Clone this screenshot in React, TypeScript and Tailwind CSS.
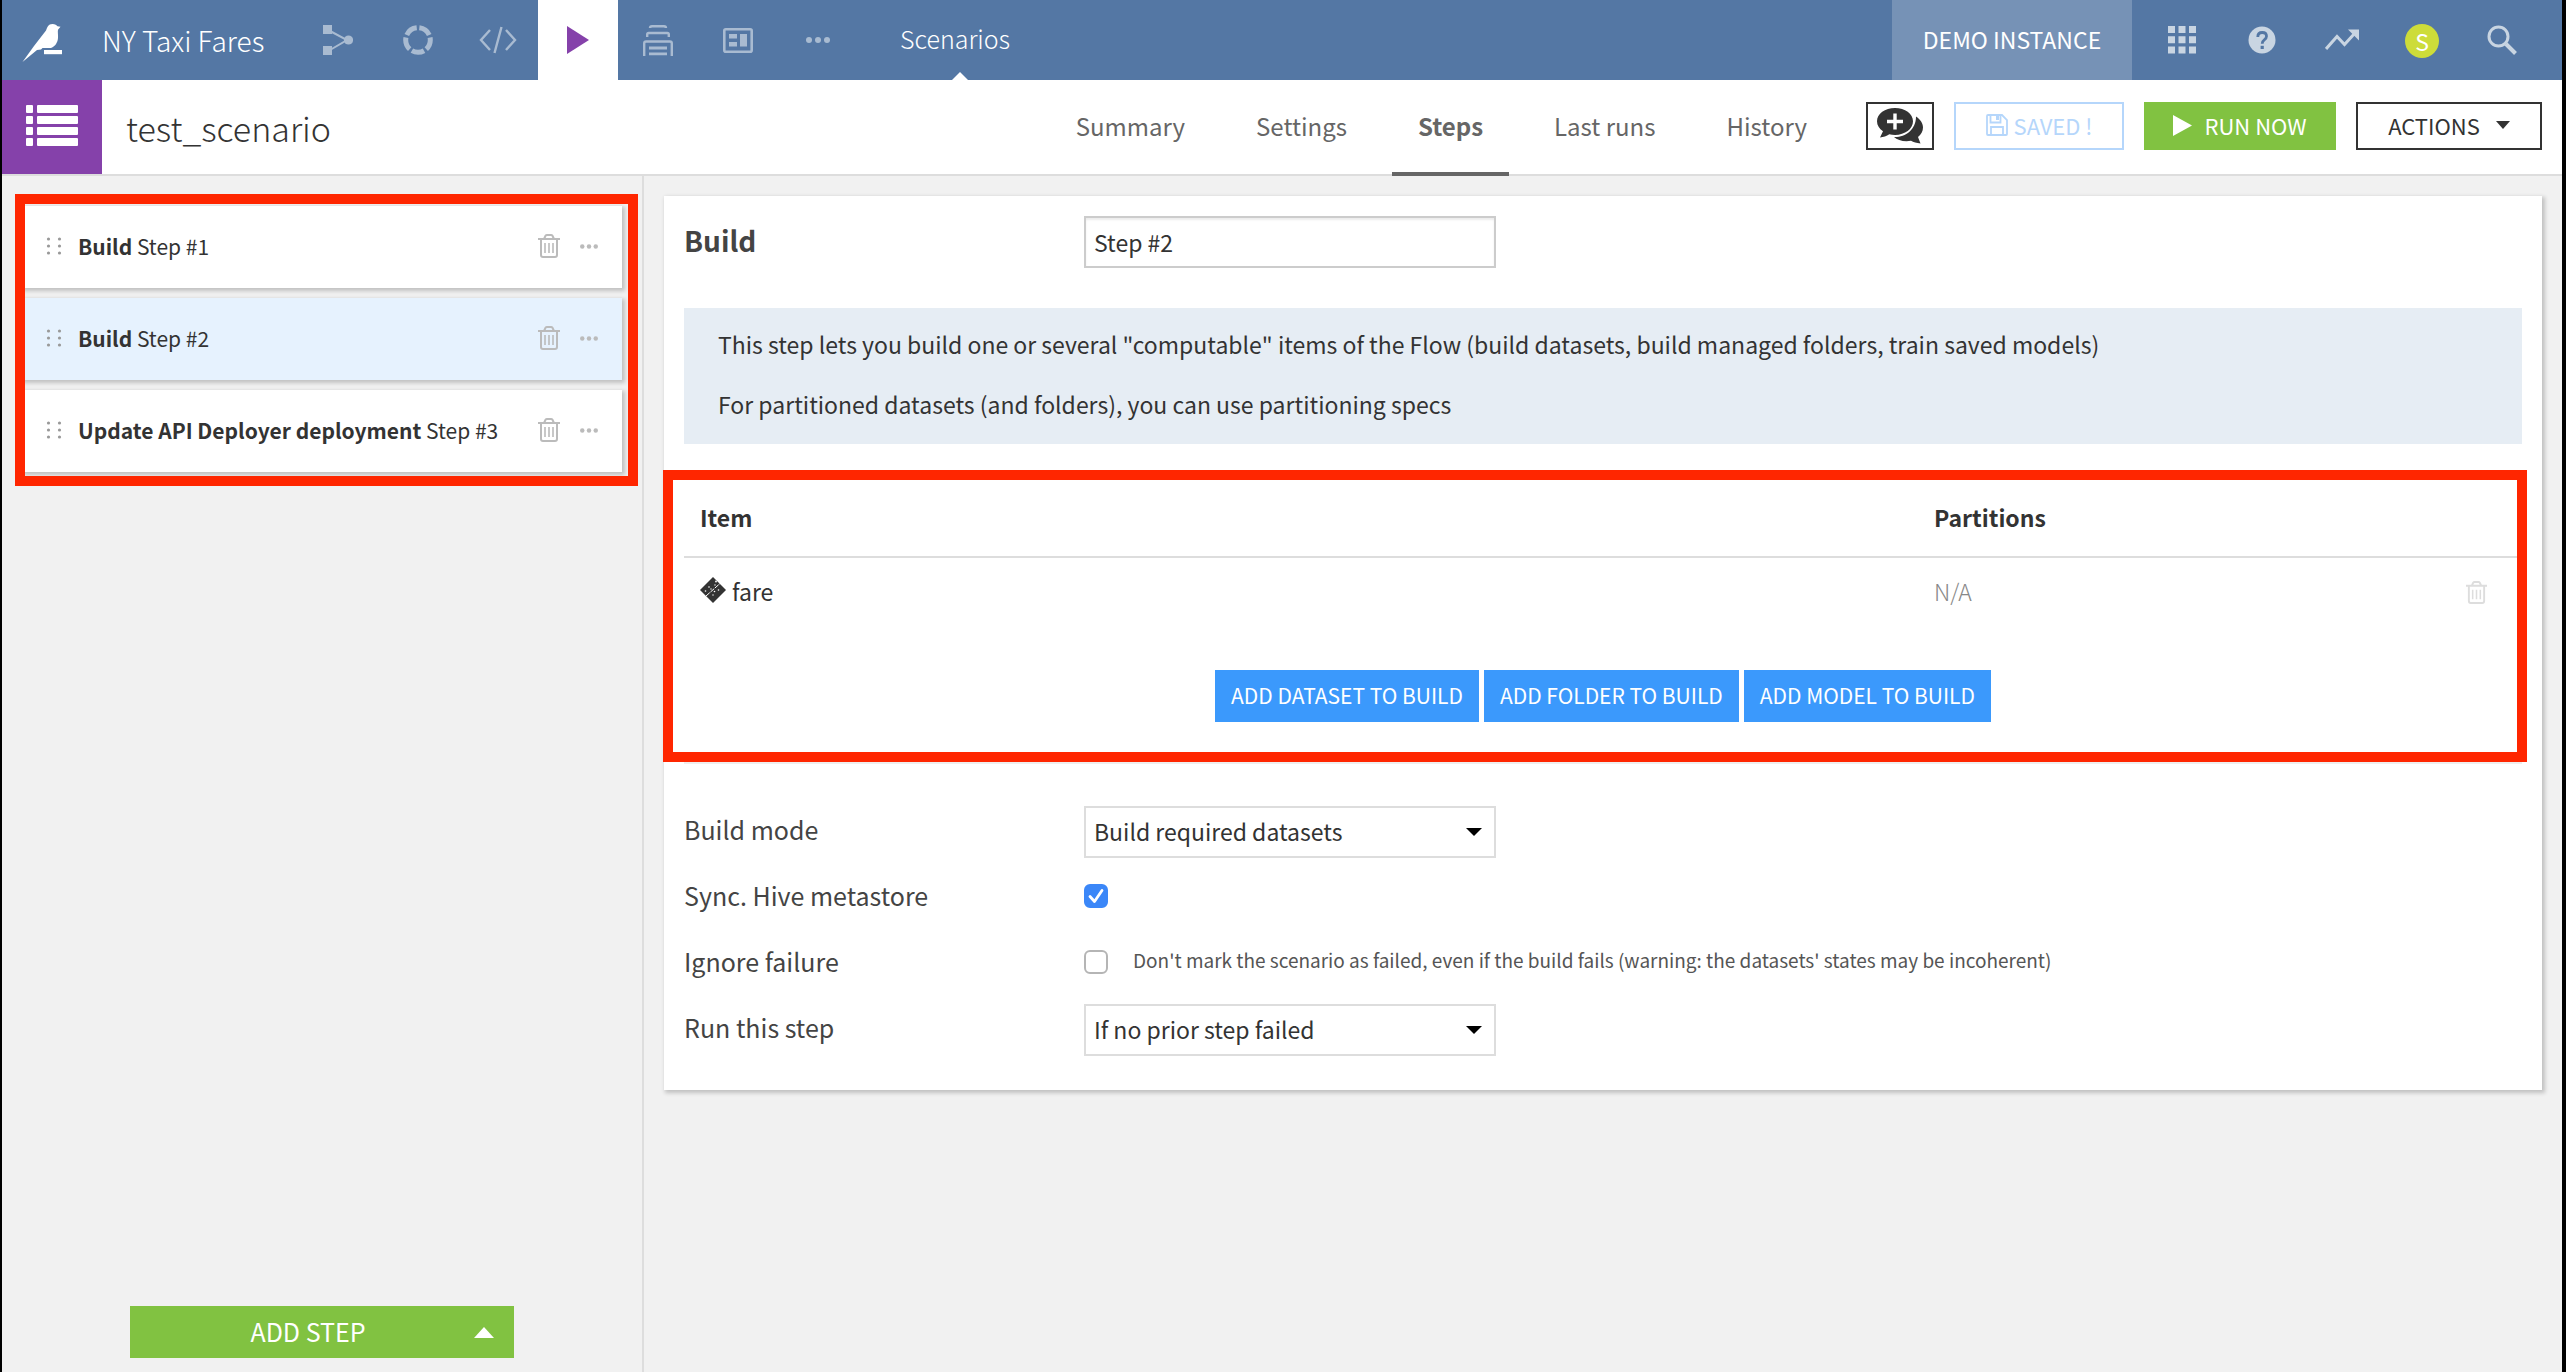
import React from 'react';

interface Step {
  type: string;
  name: string;
  selected?: boolean;
}

const steps: Step[] = [
  { type: 'Build', name: 'Step #1' },
  { type: 'Build', name: 'Step #2', selected: true },
  { type: 'Update API Deployer deployment', name: 'Step #3' },
];

const tabs = ['Summary', 'Settings', 'Steps', 'Last runs', 'History'];

const TrashIcon: React.FC<{ className?: string }> = ({ className }) => (
  <svg className={className} viewBox="0 0 22 24" fill="none" stroke="currentColor" strokeWidth={2}>
    <path d="M0 5h22M6 5l1.500-3.200Q8 1 9 1h4q1 0 1.500.800L16 5M3 5v16q0 2 2 2h12q2 0 2-2V5" />
    <path d="M7 9v10M11 9v10M15 9v10" strokeWidth={1.6} />
  </svg>
);

const DotsIcon: React.FC<{ className?: string }> = ({ className }) => (
  <svg className={className} viewBox="0 0 24 6" fill="currentColor">
    <circle cx="3" cy="3" r="3" />
    <circle cx="12" cy="3" r="3" />
    <circle cx="21" cy="3" r="3" />
  </svg>
);

const DragHandle = () => (
  <svg className="w-4 h-5 text-[#999]" viewBox="0 0 16 20" fill="currentColor">
    {[2, 9, 16].map((y) => (
      <g key={y}>
        <circle cx="2.500" cy={y} r="1.600" />
        <circle cx="13.500" cy={y} r="1.600" />
      </g>
    ))}
  </svg>
);

const BirdLogo = () => (
  <svg className="w-10 h-[38px]" viewBox="0 0 40 38" fill="white">
    <path d="M30.500 0c2.500 0 4.300 1 5 2.300L38.500 2.700l-2.500 3c-.500 2 .300 5 0 8.300-.400 4.500-2.500 8-7 10h-8.500l-1.500 1.500-4 .500L.500 38 12 22 24 6.500C25.500 3 26 0 30.500 0z" />
    <path d="M22 26h18v4.200H22z" />
  </svg>
);

const FlowIcon = () => (
  <svg className="w-[30px] h-[30px]" viewBox="0 0 30 30" fill="currentColor">
    <path d="M0 0h9v9H0zM0 21h9v9H0z" />
    <path d="M7 6l17 9L7 25" fill="none" stroke="currentColor" strokeWidth={2} />
    <circle cx="25.500" cy="15" r="4.600" />
  </svg>
);

const LabIcon = () => (
  <svg className="w-[30px] h-[30px]" viewBox="0 0 30 30" fill="none" stroke="currentColor" strokeWidth={5}>
    <circle cx="15" cy="15" r="12.300" pathLength={100} strokeDasharray="16.500 3.500" strokeDashoffset={-16.800} />
  </svg>
);

const CodeIcon = () => (
  <svg className="w-[38px] h-7" viewBox="0 0 38 28" fill="none" stroke="currentColor" strokeWidth={2.400}>
    <path d="M11 4L2 14l9 10M27 4l9 10-9 10M22.500 1L15.500 27" />
  </svg>
);

const PlayIcon: React.FC<{ className?: string }> = ({ className }) => (
  <svg className={className} viewBox="0 0 22 28" fill="currentColor" preserveAspectRatio="none">
    <path d="M0 0l22 14L0 28z" />
  </svg>
);

const JobsIcon = () => (
  <svg className="w-[30px] h-[31px]" viewBox="0 0 30 31" fill="none" stroke="currentColor" strokeWidth={2.400}>
    <path d="M7 3q0-1.700 2-1.700h12q2 0 2 1.700M4.200 12V9.500q0-1.500 1.500-1.500h18.600q1.500 0 1.500 1.500V12M1.200 31V18.500Q1.200 16.500 3 16.500h24q1.800 0 1.800 2V31" />
    <path d="M6 23h18M6 28.800h18" strokeWidth={2.800} />
  </svg>
);

const DashboardIcon = () => (
  <svg className="w-[30px] h-[25px]" viewBox="0 0 30 25" fill="currentColor">
    <rect x="1.300" y="1.300" width="27.400" height="22.400" rx="1.500" fill="none" stroke="currentColor" strokeWidth={2.600} />
    <path d="M6 6h8v4.500H6zM6 14h8v4.500H6zM17 6h7v12.500h-7z" />
  </svg>
);

const GridIcon = () => (
  <svg className="w-7 h-7" viewBox="0 0 28 28" fill="currentColor">
    {[0, 10.300, 20.600].map((y) => (
      <path key={y} d={`M0 ${y}h7v7H0zM10.500 ${y}h7v7h-7zM21 ${y}h7v7h-7z`} />
    ))}
  </svg>
);

const HelpIcon = () => (
  <svg className="w-7 h-7" viewBox="0 0 28 28">
    <circle cx="14" cy="14" r="13.500" fill="currentColor" />
    <path d="M9.800 11q0-4.500 4.400-4.500 4.300 0 4.300 3.800 0 2-2.200 3.500-2.100 1.500-2.100 4" fill="none" stroke="#5477a4" strokeWidth={2.800} />
    <path d="M12.600 19.800h3.200V23h-3.200z" fill="#5477a4" />
  </svg>
);

const TrendIcon = () => (
  <svg className="w-[34px] h-[22px]" viewBox="0 0 34 22" fill="none" stroke="currentColor" strokeWidth={3}>
    <path d="M1 20L12 7.500l7.500 8L30 4" />
    <path d="M23 .500h11v11z" fill="currentColor" stroke="none" />
  </svg>
);

const SearchIcon = () => (
  <svg className="w-[30px] h-[30px]" viewBox="0 0 30 30" fill="none" stroke="currentColor">
    <circle cx="11.500" cy="11.500" r="9.500" strokeWidth={3} />
    <path d="M19 19l9.500 9.500" strokeWidth={4} />
  </svg>
);

const ScenarioIcon = () => (
  <svg className="w-[52px] h-[41px]" viewBox="0 0 52 41" fill="white">
    {[0, 11, 22, 33].map((y) => (
      <g key={y}>
        <rect y={y} width="7" height="8" rx="1" />
        <rect x="11" y={y} width="41" height="8" rx="1" />
      </g>
    ))}
  </svg>
);

const DiscussIcon = () => (
  <svg className="w-[46px] h-9" viewBox="0 0 46 36" fill="currentColor">
    <path d="M39 8.500c4 2.500 7 6.500 7 11 0 4-2 7-5 9.500l2.500 6.500c-4-.300-7-1.200-9.500-2.700-7 1.200-13.500-.500-17-3.800C28 29.500 39 22 39 8.500z" />
    <path d="M18 0c10 0 18 5.800 18 13.300S28 27 18 27c-2 0-4-.200-5.700-.700C9.500 28 6.500 29.300 3 29.500l3-6.300C2.300 20.800 0 17.300 0 13.300 0 5.800 8 0 18 0z" />
    <path d="M18 5.500v16M10 13.500h16" stroke="white" strokeWidth={3.400} />
  </svg>
);

const SaveIcon = () => (
  <svg className="w-[22px] h-[22px]" viewBox="0 0 22 22" fill="none" stroke="currentColor" strokeWidth={1.800}>
    <path d="M1 2q0-1 1-1h14l5 5v14q0 1-1 1H2q-1 0-1-1z" />
    <path d="M5 21v-8h12v8M4.500 1v7.500h10V1" />
    <path d="M10 2h3v4h-3z" fill="currentColor" stroke="none" />
  </svg>
);

const DatasetIcon = () => (
  <svg className="mb-1 w-[26px] h-[26px]" viewBox="0 0 26 26">
    <path d="M13 0l13 13-13 13L0 13z" fill="#333" />
    <path d="M6 19L20 6.500" stroke="white" strokeWidth={1} strokeDasharray="5 1" />
    <g fill="white">
      <circle cx="9" cy="10" r=".8" />
      <circle cx="11" cy="12" r=".7" />
      <circle cx="16" cy="4.500" r=".9" />
      <circle cx="15" cy="8" r=".7" />
      <circle cx="5.500" cy="14" r=".8" />
      <circle cx="14.500" cy="14.500" r=".8" />
      <circle cx="18.500" cy="13" r=".8" />
      <circle cx="13" cy="18" r=".7" />
    </g>
  </svg>
);

const NavItem: React.FC<{ label: string; active?: boolean; children: React.ReactNode }> = ({ label, active, children }) => (
  <a
    href="#"
    aria-label={label}
    className={`flex w-20 h-20 items-center justify-center ${active ? 'bg-white text-[#8541aa]' : 'text-[#a9bbd1]'}`}
  >
    {children}
  </a>
);

const TopBar = () => (
  <header className="flex h-20 items-center bg-[#5477a4] text-white">
    <a href="#" aria-label="Home" className="flex pl-5 pt-1.5">
      <BirdLogo />
    </a>
    <a href="#" className="w-[236px] pl-10 text-[28px] font-light whitespace-nowrap">NY Taxi Fares</a>
    <nav className="flex">
      <NavItem label="Flow"><FlowIcon /></NavItem>
      <NavItem label="Lab"><LabIcon /></NavItem>
      <NavItem label="Code"><CodeIcon /></NavItem>
      <NavItem label="Scenarios" active><PlayIcon className="w-[22px] h-7" /></NavItem>
      <NavItem label="Jobs"><JobsIcon /></NavItem>
      <NavItem label="Dashboards"><DashboardIcon /></NavItem>
      <NavItem label="More"><DotsIcon className="w-6 h-1.5" /></NavItem>
    </nav>
    <a href="#" className="relative flex h-20 items-center pl-[42px] pb-0.5 pr-2 text-[25px] font-light">
      Scenarios
      <svg className="absolute bottom-0 left-[94px] w-4 h-2" viewBox="0 0 16 8" fill="white">
        <path d="M0 8l8-8 8 8z" />
      </svg>
    </a>
    <div className="ml-auto flex items-center pr-5 text-[#c9d5e2]">
      <div className="mr-2.5 flex w-60 h-20 items-center justify-center bg-[#7692b6] pb-0.5 text-[23px] text-white">DEMO INSTANCE</div>
      <button aria-label="Apps" className="flex w-20 justify-center"><GridIcon /></button>
      <button aria-label="Help" className="flex w-20 justify-center"><HelpIcon /></button>
      <button aria-label="Activity" className="flex w-20 justify-center"><TrendIcon /></button>
      <button className="flex w-20 justify-center pt-0.5">
        <span className="flex size-[34px] items-center justify-center rounded-full bg-[#cddc39] text-[23px] text-white">S</span>
      </button>
      <button aria-label="Search" className="flex w-20 justify-center"><SearchIcon /></button>
    </div>
  </header>
);

const SubHeader = () => (
  <div className="flex h-24 border-b-2 border-[#ddd] bg-white">
    <div className="flex w-[100px] items-center justify-center bg-[#8541aa] pb-1">
      <ScenarioIcon />
    </div>
    <h1 className="flex items-center pl-6 text-[34px] font-light text-[#333]">test_scenario</h1>
    <div className="ml-auto flex">
      <nav className="mr-[33px] flex gap-[19px]">
        {tabs.map((tab) => (
          <a
            key={tab}
            href="#"
            className={`-mb-0.5 flex items-center border-b-4 px-[26px] text-2xl text-[#666] ${
              tab === 'Steps' ? 'border-[#666] font-bold' : 'border-transparent'
            }`}
          >
            {tab}
          </a>
        ))}
      </nav>
      <div className="flex items-center gap-5 pr-5 pb-0.5 text-[22px] text-[#333]">
        <button aria-label="Discussions" className="flex w-[68px] h-12 items-center justify-center border-2 border-[#333]">
          <DiscussIcon />
        </button>
        <button className="flex w-[170px] h-12 items-center justify-center gap-1.5 border-2 border-[#b5d6fb] pb-0.5 text-[#b5d6fb]">
          <SaveIcon />
          SAVED !
        </button>
        <button className="flex w-48 h-12 items-center justify-center gap-3 bg-[#81c241] pb-0.5 text-white">
          <PlayIcon className="w-[19px] h-[21px]" />
          RUN NOW
        </button>
        <button className="flex w-[186px] h-12 items-center justify-center gap-4 border-2 border-[#333] pb-0.5">
          ACTIONS
          <svg className="w-3.5 h-2" viewBox="0 0 14 8" fill="currentColor"><path d="M0 0h14L7 8z" /></svg>
        </button>
      </div>
    </div>
  </div>
);

const StepCard: React.FC<{ step: Step }> = ({ step }) => (
  <li
    className={`flex h-[82px] items-center px-6 shadow-[2px_2px_4px_1px_rgba(0,0,0,0.2)] ${
      step.selected ? 'bg-[#e6f2fe]' : 'bg-white'
    }`}
  >
    <DragHandle />
    <span className="pl-4 text-[21px] text-[#333]">
      <b className="font-bold">{step.type}</b> {step.name}
    </span>
    <div className="ml-auto flex items-center gap-5 pb-0.5 text-[#bbb]">
      <button aria-label="Delete step"><TrashIcon className="w-[22px] h-6" /></button>
      <button aria-label="More actions"><DotsIcon className="w-[18px] h-[5px]" /></button>
    </div>
  </li>
);

const Sidebar = () => (
  <aside className="flex w-[642px] shrink-0 flex-col border-r-2 border-[#ddd] pt-[30px]">
    <div className="relative pl-5 pr-5">
      <ul className="flex flex-col gap-2.5">
        {steps.map((step) => (
          <StepCard key={step.name} step={step} />
        ))}
      </ul>
      <div className="pointer-events-none absolute -top-3 -bottom-3.5 left-[13px] right-1 border-10 border-[#ff2600]" />
    </div>
    <button className="mt-auto mb-3.5 ml-32 flex w-96 h-[52px] items-center bg-[#81c241] pr-5 text-[25px] text-white">
      <span className="flex-1 pl-3">ADD STEP</span>
      <svg className="w-5 h-[11px]" viewBox="0 0 20 11" fill="currentColor"><path d="M10 0l10 11H0z" /></svg>
    </button>
  </aside>
);

const Select: React.FC<{ id: string; value: string }> = ({ id, value }) => (
  <div className="relative w-[412px]">
    <select id={id} defaultValue={value} className="w-full h-[52px] appearance-none border-2 border-[#ddd] bg-white pl-2 pb-0.5 text-[23px] text-[#333]">
      <option>{value}</option>
    </select>
    <svg className="pointer-events-none absolute right-3.5 top-[22px] w-4 h-2" viewBox="0 0 16 8">
      <path d="M0 0h16L8 8z" />
    </svg>
  </div>
);

const Checkbox: React.FC<{ id: string; checked?: boolean }> = ({ id, checked }) => (
  <span className="relative mb-1 flex size-6">
    <input
      id={id}
      type="checkbox"
      defaultChecked={checked}
      className="peer size-6 appearance-none rounded-[6px] border-2 border-[#b5b5b5] bg-white checked:border-[#3b87f8] checked:bg-[#3b87f8]"
    />
    <svg className="pointer-events-none absolute inset-0 hidden peer-checked:block" viewBox="0 0 24 24" fill="none" stroke="white" strokeWidth={2.800}>
      <path d="M6 12.500l4.500 5L18 6.500" strokeLinecap="round" strokeLinejoin="round" />
    </svg>
  </span>
);

const BuildItems = () => (
  <section className="relative mt-[26px] border-b-2 border-[#eee]">
    <table className="w-full text-left text-[#333]">
      <thead>
        <tr className="h-[87px] border-b-2 border-[#ddd]">
          <th scope="col" className="w-[1234px] pl-4 pt-2 font-bold">Item</th>
          <th scope="col" className="pl-4 pt-2 font-bold">Partitions</th>
          <th scope="col" aria-label="Delete" />
        </tr>
      </thead>
      <tbody>
        <tr className="h-[72px]">
          <td className="pl-4 pb-1">
            <div className="flex items-center gap-1.5">
              <DatasetIcon />
              fare
            </div>
          </td>
          <td className="pl-4 pb-1 font-light text-[#888]">N/A</td>
          <td className="pb-0.5">
            <button aria-label="Delete item" className="ml-auto mr-[35px] flex text-[#ddd]">
              <TrashIcon className="w-[21px] h-[23px]" />
            </button>
          </td>
        </tr>
      </tbody>
    </table>
    <div className="flex justify-center gap-[5px] pt-[41px] pb-10 text-[21px] text-white">
      <button className="h-[52px] bg-[#3b99fc] px-4">ADD DATASET TO BUILD</button>
      <button className="h-[52px] bg-[#3b99fc] px-4">ADD FOLDER TO BUILD</button>
      <button className="h-[52px] bg-[#3b99fc] px-4">ADD MODEL TO BUILD</button>
    </div>
    <div className="pointer-events-none absolute top-0 bottom-0 -left-[21px] -right-[5px] border-10 border-[#ff2600]" />
  </section>
);

const labelClass = 'w-[400px] pb-1 text-[25px] text-[#444]';

const StepForm = () => (
  <main className="min-w-0 flex-1 p-5 text-[23px]">
    <div className="bg-white px-5 pt-5 pb-[34px] shadow-[2px_2px_4px_1px_rgba(0,0,0,0.2)]">
      <div className="flex items-center">
        <label htmlFor="step-name" className="w-[400px] pb-1 text-[28px] font-bold text-[#444]">Build</label>
        <input
          id="step-name"
          defaultValue="Step #2"
          className="w-[412px] h-[52px] border-2 border-[#ccc] px-2 text-[#333] shadow-[inset_0_2px_2px_rgba(0,0,0,0.08)]"
        />
      </div>
      <div className="mt-10 h-[136px] bg-[#e6edf4] px-[34px] pt-1.5 leading-[60px] text-[#333]">
        <p>This step lets you build one or several "computable" items of the Flow (build datasets, build managed folders, train saved models)</p>
        <p>For partitioned datasets (and folders), you can use partitioning specs</p>
      </div>
      <BuildItems />
      <div className="mt-[42px] flex flex-col gap-3.5">
        <div className="flex h-[52px] items-center">
          <label htmlFor="build-mode" className={labelClass}>Build mode</label>
          <Select id="build-mode" value="Build required datasets" />
        </div>
        <div className="flex h-[52px] items-center">
          <label htmlFor="sync-hive" className={labelClass}>Sync. Hive metastore</label>
          <Checkbox id="sync-hive" checked />
        </div>
        <div className="flex h-[52px] items-center">
          <label htmlFor="ignore-failure" className={labelClass}>Ignore failure</label>
          <Checkbox id="ignore-failure" />
          <span className="pl-[25px] pb-2 text-[19px] text-[#555]">
            Don't mark the scenario as failed, even if the build fails (warning: the datasets' states may be incoherent)
          </span>
        </div>
        <div className="flex h-[52px] items-center">
          <label htmlFor="run-step" className={labelClass}>Run this step</label>
          <Select id="run-step" value="If no prior step failed" />
        </div>
      </div>
    </div>
  </main>
);

const App: React.FC = () => {
  return (
    <div className="flex min-h-screen flex-col border-l-2 border-r-4 border-black bg-[#f1f1f1] font-['Noto_Sans_CJK_SC','Open_Sans',sans-serif]">
      <TopBar />
      <SubHeader />
      <div className="flex flex-1">
        <Sidebar />
        <StepForm />
      </div>
    </div>
  );
};

export default App;
